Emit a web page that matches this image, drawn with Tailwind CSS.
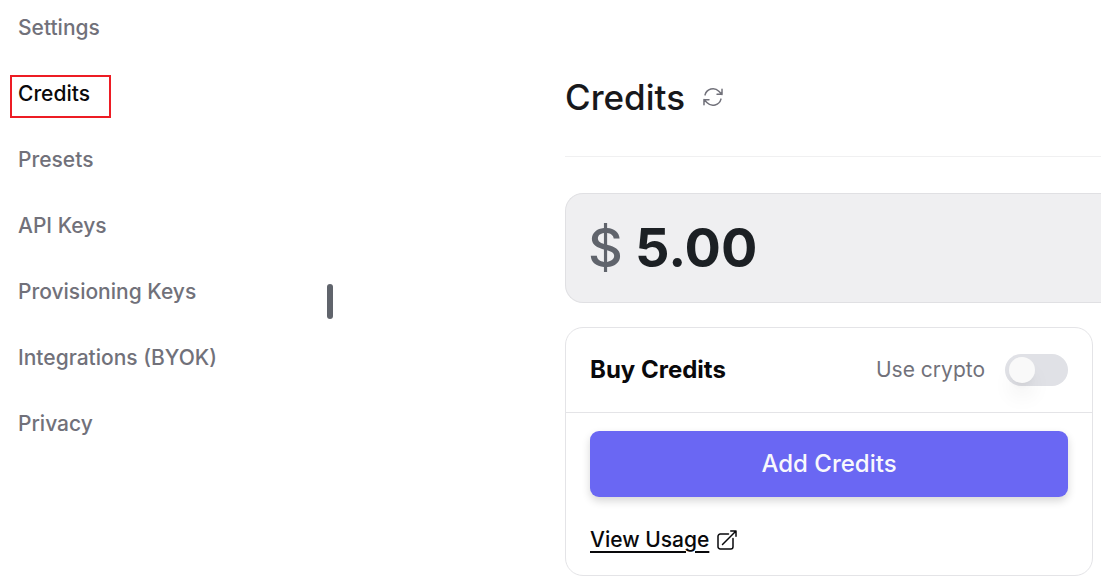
<!DOCTYPE html>
<html lang="en">
<head>
  <meta charset="UTF-8" />
  <meta name="viewport" content="width=device-width, initial-scale=1.0" />
  <title>Credits</title>
  <script src="https://cdn.jsdelivr.net/npm/@tailwindcss/browser@4"></script>
</head>
<body class="bg-white font-['Inter',sans-serif] text-black min-h-screen flex">

  <!-- Settings menu -->
  <aside class="relative w-[330px] shrink-0 mr-[235px]">
    <nav class="flex flex-col items-start gap-9 pl-[18px] pt-[13px] text-[21px] leading-[30px] font-medium text-[#71717a]">
      <a href="#">Settings</a>
      <a href="#" aria-current="page" class="relative text-[#09090b]">
        Credits
        <span class="absolute -left-2 -top-1 w-[101px] h-[43px] border-2 border-[#ed1c24]"></span>
      </a>
      <a href="#">Presets</a>
      <a href="#">API Keys</a>
      <a href="#">Provisioning Keys</a>
      <a href="#">Integrations (BYOK)</a>
      <a href="#">Privacy</a>
    </nav>
    <!-- Drag handle -->
    <div class="absolute -right-[3px] top-[284px] w-1.5 h-[35px] rounded-full bg-[#60646c]"></div>
  </aside>

  <main class="flex-1 min-w-0 pt-[70px] pb-2">
    <header class="flex items-center gap-4 h-[87px] pb-8 border-b border-[#f0f0f1]">
      <h1 class="text-[35px] leading-[54px] font-medium text-[#18181b]">Credits</h1>
      <button type="button" aria-label="Refresh" class="text-[#71717a]">
        <svg class="size-6" viewBox="0 0 24 24" fill="none" stroke="currentColor" stroke-width="1.5" stroke-linecap="round" stroke-linejoin="round">
          <path d="M16.023 9.348h4.992v-.001M2.985 19.644v-4.992m0 0h4.992m-4.993 0 3.181 3.183a8.25 8.25 0 0 0 13.803-3.7M4.031 9.865a8.25 8.25 0 0 1 13.803-3.7l3.181 3.182m0-4.991v4.99" />
        </svg>
      </button>
    </header>

    <!-- Balance -->
    <section class="mt-9 h-[110px] flex items-center gap-3 pl-[22px] rounded-l-[18px] border border-r-0 border-[#e0e0e3] bg-[#efeff1] text-[54px] leading-[72px]">
      <span class="font-medium text-[#60646c]">$</span>
      <span class="font-bold text-[#1c2024]">5.00</span>
    </section>

    <section class="mt-6 mr-2 rounded-[18px] border border-[#e4e4e7]">
      <div class="flex items-center justify-between h-[85px] px-6 border-b border-[#e4e4e7]">
        <h2 class="text-2xl font-bold text-[#09090b]">Buy Credits</h2>
        <label class="flex items-center gap-5 text-[21px] leading-[30px] text-[#71717a]">
          Use crypto
          <span class="relative w-[63px] h-8">
            <input type="checkbox" role="switch" class="peer appearance-none block size-full rounded-full bg-[#e0e1e6] checked:bg-[#6a67f3]" />
            <span class="absolute left-1 top-[3px] size-[26px] rounded-full bg-[#f9f9f9] shadow-[0_15px_22px_-4px_rgb(0_0_0/0.1),0_6px_9px_-6px_rgb(0_0_0/0.1)] peer-checked:translate-x-7"></span>
          </span>
        </label>
      </div>
      <div class="px-6 pt-[18px] pb-5">
        <button type="button" class="w-full h-[66px] rounded-[9px] bg-[#6a67f3] text-2xl font-medium text-[#f8f8fc] shadow-[0_4px_8px_rgb(0_0_0/0.16)]">Add Credits</button>
        <a href="#" class="mt-7 flex items-center gap-1.5 text-[21px] leading-[30px] font-medium text-[#09090b]">
          <span class="underline underline-offset-4">View Usage</span>
          <svg class="size-6" viewBox="0 0 24 24" fill="none" stroke="currentColor" stroke-width="1.5" stroke-linecap="round" stroke-linejoin="round">
            <path d="M13.5 6H5.25A2.25 2.25 0 0 0 3 8.25v10.5A2.25 2.25 0 0 0 5.25 21h10.5A2.25 2.25 0 0 0 18 18.75V10.5m-10.5 6L21 3m0 0h-5.25M21 3v5.25" />
          </svg>
        </a>
      </div>
    </section>
  </main>

</body>
</html>
